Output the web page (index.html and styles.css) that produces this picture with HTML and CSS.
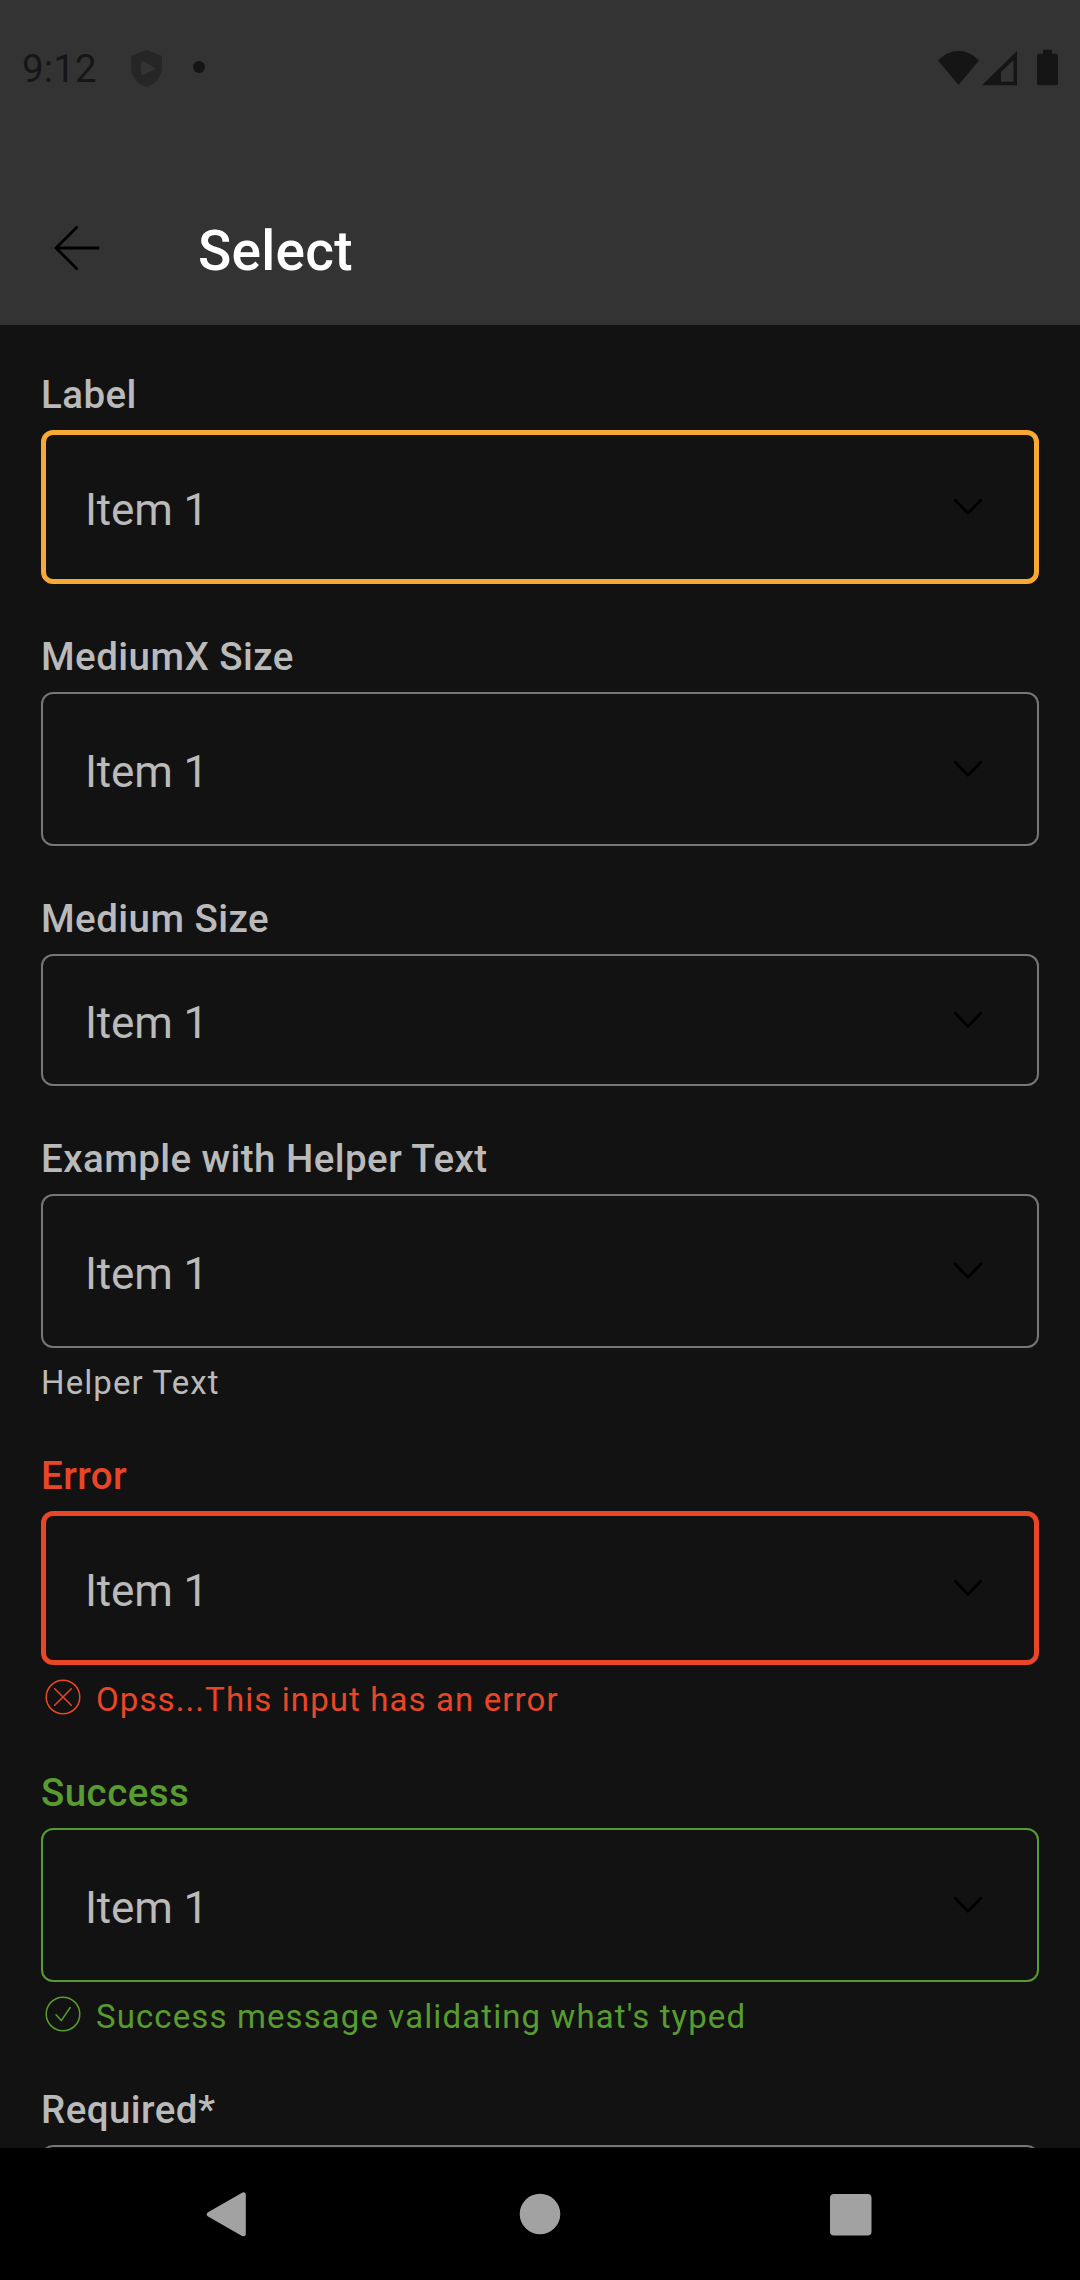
FILE: index.html
```html
<!DOCTYPE html>
<html lang="en">
<head>
<meta charset="utf-8">
<title>Select</title>
<link rel="stylesheet" href="styles.css">
</head>
<body>
<svg class="defs" width="0" height="0" aria-hidden="true">
  <symbol id="chevron" viewBox="0 0 44 44"><path d="M9.3 15.3L22 28.3L34.7 15.3" fill="none" stroke="#000" stroke-width="2.8" stroke-linecap="round" stroke-linejoin="round"/></symbol>
</svg>
<div class="screen">
  <header class="header">
    <div class="status">
      <span class="clock">9:12</span>
      <svg class="shield" width="32" height="38" viewBox="0 0 32 38"><path fill="#262626" fill-rule="evenodd" d="M15.5.7L31 7V18C31 27 25 35.500 15.500 38C6 35.500 0 27 0 18V7ZM10 14.500V24.500Q10.200 26.800 12.500 25.800L23.500 20.500Q25 19.300 23.500 18.200L12.500 12.400Q10.200 11.800 10 14.500Z"/></svg>
      <span class="dot"></span>
      <svg class="signals" width="122" height="38" viewBox="0 0 122 38" fill="#151515"><path d="M0 11.500Q8.500 2 20.500 2T41 11.500L20.500 36Z"/><path fill-rule="evenodd" d="M79 2V36.300H44ZM75.500 11L63 23V32.700H75.500Z"/><path d="M105 .7H114V4.700H118Q120 4.700 120 6.700V34.200Q120 36.200 118 36.200H101Q99 36.200 99 34.200V6.700Q99 4.700 101 4.700H105Z"/></svg>
    </div>
    <div class="toolbar">
      <svg class="back" width="48" height="48" viewBox="0 0 48 48" fill="none" stroke="#000" stroke-width="2.800" stroke-linecap="round" stroke-linejoin="round"><path d="M23.800 3.300L3 24L23.800 44.700M3 24H45"/></svg>
      <h1 class="title">Select</h1>
    </div>
  </header>
  <main class="form">
    <div class="field focused"><div class="label">Label</div><div class="select"><span class="value">Item 1</span><svg class="chevron"><use href="#chevron"/></svg></div></div>
    <div class="field"><div class="label">MediumX Size</div><div class="select"><span class="value">Item 1</span><svg class="chevron"><use href="#chevron"/></svg></div></div>
    <div class="field"><div class="label">Medium Size</div><div class="select medium"><span class="value">Item 1</span><svg class="chevron"><use href="#chevron"/></svg></div></div>
    <div class="field"><div class="label">Example with Helper Text</div><div class="select"><span class="value">Item 1</span><svg class="chevron"><use href="#chevron"/></svg></div><div class="helper">Helper Text</div></div>
    <div class="field error"><div class="label">Error</div><div class="select"><span class="value">Item 1</span><svg class="chevron"><use href="#chevron"/></svg></div>
      <div class="helper"><svg class="state" viewBox="0 0 44 44"><circle cx="22" cy="22" r="16.800"/><path d="M13.700 13.700L30.300 30.300M30.300 13.700L13.700 30.300"/></svg>Opss...This input has an error</div></div>
    <div class="field success"><div class="label">Success</div><div class="select"><span class="value">Item 1</span><svg class="chevron"><use href="#chevron"/></svg></div>
      <div class="helper"><svg class="state" viewBox="0 0 44 44"><circle cx="22" cy="22" r="16.800"/><path d="M15 22.800L20.300 28.600L29.200 15.500"/></svg>Success message validating what's typed</div></div>
    <div class="field"><div class="label">Required*</div><div class="select"></div></div>
  </main>
  <nav class="navbar">
    <svg width="60" height="60" viewBox="0 0 60 60"><path d="M10.300 30.300L44.300 10.800V49.800Z" fill="#a2a2a2" stroke="#a2a2a2" stroke-width="5" stroke-linejoin="round"/></svg>
    <svg width="60" height="60" viewBox="0 0 60 60"><circle cx="30" cy="30" r="20.300" fill="#a2a2a2"/></svg>
    <svg width="60" height="60" viewBox="0 0 60 60"><rect x="9" y="10" width="41.500" height="41.500" rx="4" fill="#a2a2a2"/></svg>
  </nav>
</div>
</body>
</html>
```
FILE: styles.css
```css
* { box-sizing: border-box; }
body { margin: 0; background: #121212; font-family: Roboto, "Liberation Sans", sans-serif; }
.defs { display: block; }
.screen { width: 1080px; height: 2280px; display: flex; flex-direction: column; overflow: hidden; }
.header { flex: none; height: 325px; background: #333; display: flex; flex-direction: column; }
.status { height: 136px; padding: 0 22px; display: flex; align-items: center; }
.clock { width: 109px; font-size: 38.5px; line-height: 46px; color: #161616; padding-top: 1px; letter-spacing: 0.1px; }
.shield { display: block; }
.dot { width: 12px; height: 12px; border-radius: 50%; background: #151515; margin: 0 0 2px 29.500px; }
.signals { margin-left: auto; margin-right: -2px; }
.toolbar { height: 189px; padding: 11px 0 0 53px; display: flex; align-items: flex-start; }
.back { display: block; flex: none; margin-top: 77px; }
.title { margin: 71px 0 0 97px; font-size: 55px; line-height: 66px; font-weight: 500; letter-spacing: 0.25px; color: #fff; }
.form { flex: 1; min-height: 0; overflow: hidden; display: flex; flex-direction: column; gap: 50px; padding: 47px 41px 0; }
.field { flex: none; color: #bababa; }
.label { font-size: 38.5px; line-height: 46px; font-weight: 500; letter-spacing: 0.44px; margin-bottom: 12px; }
.select { height: 154px; border: 2px solid #767676; border-radius: 12px; padding: 0 47px 0 42px; display: flex; align-items: center; justify-content: space-between; }
.medium { height: 132px; }
.value { font-size: 44px; line-height: 52px; color: #bababa; padding-top: 6px; letter-spacing: -0.12px; }
.chevron { width: 44px; height: 44px; }
.helper { display: flex; align-items: center; margin-top: 13px; padding-top: 2px; height: 42px; font-size: 33px; line-height: 42px; letter-spacing: 1.1px; }
.state { width: 44px; height: 44px; margin: -6px 11px 0 0; fill: none; stroke: currentColor; stroke-width: 1.5px; stroke-linecap: round; stroke-linejoin: round; }
.focused .select { border: 5px solid #f7a934; padding: 0 44px 0 39px; }
.error { color: #e94627; }
.error .select { border: 5px solid #e94627; padding: 0 44px 0 39px; }
.success { color: #579b31; }
.success .select { border-color: #579b31; }
.navbar { flex: none; height: 132px; background: #000; display: grid; grid-template-columns: repeat(3, 60px); justify-content: center; gap: 251px; align-items: center; }
```
